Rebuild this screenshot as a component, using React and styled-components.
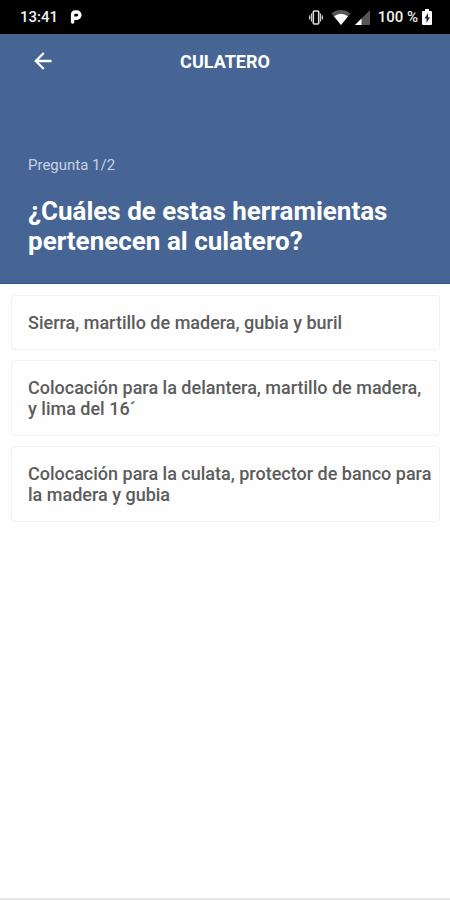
import React, { useState } from 'react'
import styled, { createGlobalStyle } from 'styled-components'

const GlobalStyle = createGlobalStyle`
  * {
    box-sizing: border-box;
  }
  body {
    margin: 0;
    background-color: #fefefe;
    font-family: Roboto, "Liberation Sans", sans-serif;
  }
`;

const Container = styled.div`
  min-height: 100vh;
  display: flex;
  flex-direction: column;
`;

const StatusBar = styled.div`
  height: 34px;
  padding: 0 18px 0 20px;
  display: flex;
  align-items: center;
  justify-content: space-between;
  background-color: #000;
  color: #f2f2f2;
  font-size: 15px;
  font-weight: 500;
`;

const StatusGroup = styled.div`
  display: flex;
  align-items: center;
  gap: ${({gap}) => gap};
`;

const Icon = styled.svg`
  display: block;
  flex: none;
`;

const Header = styled.header`
  padding-bottom: 27px;
  background-color: #466594;
  border-bottom: 1px solid #2f568c;
  color: #fff;
`;

const Toolbar = styled.div`
  height: 54px;
  padding: 0 28px;
  display: grid;
  grid-template-columns: 30px 1fr 30px;
  align-items: center;
`;

const BackButton = styled.button`
  width: 30px;
  height: 30px;
  padding: 0;
  display: flex;
  align-items: center;
  justify-content: center;
  background-color: transparent;
  border: none;
  color: #fff;
  cursor: pointer;
`;

const Title = styled.h1`
  margin: 0;
  text-align: center;
  font-size: 18px;
  font-weight: 700;
`;

const Progress = styled.p`
  margin: 67px 28px 21px;
  font-size: 15px;
  line-height: 20px;
  color: #c6d2e6;
`;

const Question = styled.h2`
  margin: 0 28px;
  font-size: 26px;
  font-weight: 700;
  line-height: 30px;
`;

const Answers = styled.main`
  flex: 1;
  padding: 11px 10px 11px 11px;
  display: flex;
  flex-direction: column;
  gap: 10px;
`;

const Answer = styled.button`
  padding: 16px 6px 16px 16px;
  background-color: #fefefe;
  border: 1px solid #f1f2f3;
  border-radius: 4px;
  color: #5c5c5c;
  font-family: inherit;
  font-size: 18px;
  font-weight: 500;
  line-height: 21px;
  text-align: left;
  cursor: pointer;
`;

const BottomBar = styled.footer`
  height: 2px;
  background-color: #e9e9e9;
`;

const answers = [
  'Sierra, martillo de madera, gubia y buril',
  'Colocación para la delantera, martillo de madera, y lima del 16´',
  'Colocación para la culata, protector de banco para la madera y gubia',
];

function ParkingIcon() {
  return (
    <Icon width="12" height="14" viewBox="0 0 12 14" fill="none" stroke="#fff" aria-hidden="true">
      <path d="M2.6 12V4.6q0-2.6 2.6-2.6h1.6a2.9 2.9 0 0 1 0 6.2H4" strokeWidth="3.4" strokeLinejoin="round" strokeLinecap="round" />
    </Icon>
  )
}

function VibrateIcon() {
  return (
    <Icon width="14" height="15" viewBox="0 0 14 15" fill="none" stroke="#ddd" aria-hidden="true">
      <rect x="4.3" y="1" width="5.4" height="13" rx="1" strokeWidth="1.6" />
      <path d="M2.4 3.5v8M11.6 3.5v8M.6 5.5v4M13.4 5.5v4" strokeWidth="1.1" />
    </Icon>
  )
}

function WifiIcon() {
  return (
    <Icon width="20" height="15" viewBox="0 0 20 15" aria-hidden="true">
      <path d="M10 15 .5 3.5a15 15 0 0 1 19 0z" fill="#555" />
      <path d="M10 15 3 6.3q7-5 14 0z" fill="#fff" />
    </Icon>
  )
}

function SignalIcon() {
  return (
    <Icon width="15" height="15" viewBox="0 0 15 15" aria-hidden="true">
      <path d="M15 0v15H0z" fill="#555" />
      <path d="M6.5 8.5V15H0z" fill="#fff" />
    </Icon>
  )
}

function BatteryIcon() {
  return (
    <Icon width="10" height="16" viewBox="0 0 10 16" aria-hidden="true">
      <path d="M3 0h4v2h2q1 0 1 1v12q0 1-1 1H1q-1 0-1-1V3q0-1 1-1h2z" fill="#fff" />
      <path d="M6 4 2.5 9.5h2V14L8 8.2H6z" fill="#222" />
    </Icon>
  )
}

function BackIcon() {
  return (
    <Icon width="18" height="18" viewBox="0 0 18 18" fill="none" stroke="currentColor" strokeWidth="2.3" aria-hidden="true">
      <path d="M17.5 9H2M9.8 1 1.8 9l8 8" />
    </Icon>
  )
}

function App() {
  const [selected, setSelected] = useState(null);

  return (
    <Container>
      <GlobalStyle />
      <StatusBar>
        <StatusGroup gap="12px">
          <span>13:41</span>
          <ParkingIcon />
        </StatusGroup>
        <StatusGroup gap="8px">
          <StatusGroup gap="8px">
            <VibrateIcon />
            <StatusGroup gap="4px">
              <WifiIcon />
              <SignalIcon />
            </StatusGroup>
          </StatusGroup>
          <StatusGroup gap="4px">
            <span>100 %</span>
            <BatteryIcon />
          </StatusGroup>
        </StatusGroup>
      </StatusBar>
      <Header>
        <Toolbar>
          <BackButton type="button" aria-label="Volver">
            <BackIcon />
          </BackButton>
          <Title>CULATERO</Title>
        </Toolbar>
        <Progress>Pregunta 1/2</Progress>
        <Question>¿Cuáles de estas herramientas pertenecen al culatero?</Question>
      </Header>
      <Answers>
        {answers.map((answer, index) => (
          <Answer
            key={answer}
            type="button"
            aria-pressed={selected === index}
            onClick={() => setSelected(index)}
          >
            {answer}
          </Answer>
        ))}
      </Answers>
      <BottomBar />
    </Container>
  )
}

export default App
